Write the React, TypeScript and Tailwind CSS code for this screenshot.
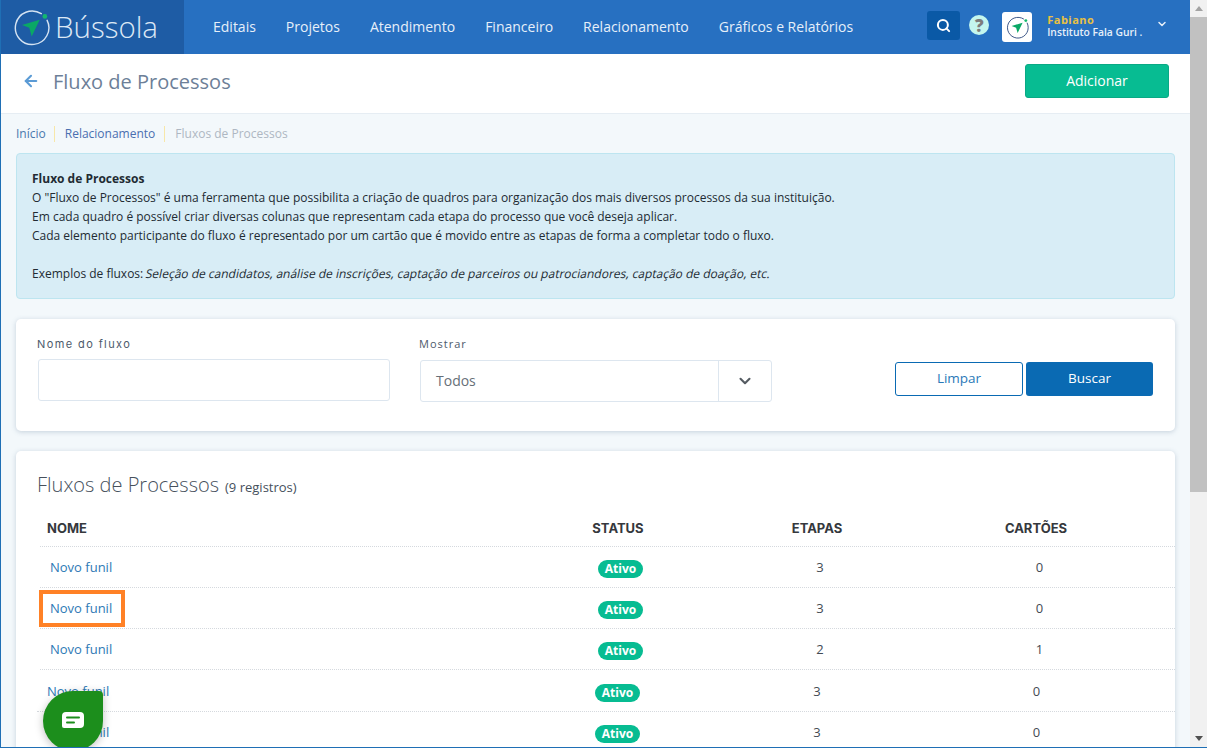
import { ArrowLeft, ChevronDown, Search } from 'lucide-react';

const menu = ['Editais', 'Projetos', 'Atendimento', 'Financeiro', 'Relacionamento', 'Gráficos e Relatórios'];

const rows = [
    { etapas: 3, cartoes: 0, box: 'h-[41px] pt-[2px]' },
    { etapas: 3, cartoes: 0, box: 'h-[41px] pt-[2px]', marked: true },
    { etapas: 2, cartoes: 1, box: 'h-[41px] pt-[2px]' },
    { etapas: 3, cartoes: 0, box: 'h-[42px] pt-[3px] -ml-[3px]' },
    { etapas: 3, cartoes: 0, box: 'h-[41px] pt-[2px] -ml-[3px]' },
];

const cols = 'grid grid-cols-[480px_196px_202px_238px] items-center';

function Compass({ size, ring, dot }: { size: number; ring: string; dot: string }) {
    return (
        <svg width={size} height={size} viewBox="0 0 36 36" fill="none">
            <path d="M27.5 4.6A16.3 16.3 0 1 0 33.2 11" stroke={ring} strokeWidth="1.4" strokeLinecap="round" />
            <circle cx="31" cy="7.2" r="2.3" fill={dot} />
            <path d="M26 10.5 8.8 15.6l7 2.6 2.4 8.6z" fill="#0aa866" />
        </svg>
    );
}

export default function App() {
    return (
        <div className="relative flex h-[748px] w-[1207px] overflow-hidden bg-[#f3f8fb] border-l border-b border-[#1f6fb5] font-['Open_Sans','Noto_Sans',sans-serif]">
            <div className="flex w-[1189px] shrink-0 flex-col">
                {/* top bar */}
                <header className="flex h-[54px] shrink-0 items-center bg-[#2770c1]">
                    <div className="flex h-full w-[183px] items-center gap-[6px] bg-[#1e5ca5] pl-[12px]">
                        <Compass size={37} ring="#d5e3f2" dot="#14b86e" />
                        <span className="-ml-[1px] text-[29.5px] font-light leading-none text-[#dce8f5]">Bússola</span>
                    </div>
                    <nav className="ml-[29px] flex -translate-y-[1px] gap-[30px]">
                        {menu.map((item) => (
                            <span key={item} className="text-[14px] font-medium text-[#e6eff9]">{item}</span>
                        ))}
                    </nav>
                    <div className="ml-[74px] flex h-[29px] w-[33px] -translate-y-[2px] items-center justify-center rounded-[3px] bg-[#0a59a6]">
                        <Search size={15} strokeWidth={3.2} className="text-white" />
                    </div>
                    <div className="ml-[9px] flex h-[20px] w-[20px] -translate-y-[2px] items-center justify-center rounded-full bg-[#c4f6ee] text-[17px] font-extrabold leading-none text-[#7d7d7d]">?</div>
                    <div className="ml-[13px] flex h-[30px] w-[30px] items-center justify-center rounded-[3px] bg-white">
                        <Compass size={23} ring="#27457a" dot="#14b86e" />
                    </div>
                    <div className="ml-[15px] flex w-[110px] -translate-y-[1px] flex-col text-[10.3px] leading-[13px]">
                        <span className="text-[11px] font-bold tracking-[0.5px] text-[#e8c043]">Fabiano</span>
                        <span className="font-semibold text-[#e6eff9]">Instituto Fala Guri .</span>
                    </div>
                    <ChevronDown size={12} strokeWidth={3} className="ml-[-1px] -translate-y-[3px] text-[#e6eff9]" />
                </header>

                {/* title */}
                <div className="flex h-[60px] shrink-0 items-start border-b border-[#e6edf3] bg-white pl-[21px] pr-[21px] pt-[10px]">
                    <ArrowLeft size={18} strokeWidth={2.8} className="mt-[8px] text-[#5b9bd5]" />
                    <h1 className="ml-[13px] mt-[1px] text-[20px] leading-[34px] text-[#6d7f98]">Fluxo de Processos</h1>
                    <button className="ml-auto h-[34px] w-[144px] rounded-[3px] border border-[#0aa985] bg-[#07bc92] pb-[2px] text-[14px] text-white">Adicionar</button>
                </div>

                <main className="flex flex-col px-[15px]">
                    {/* breadcrumb */}
                    <div className="flex h-[39px] items-center text-[12px]">
                        <span className="text-[#4a78ad]">Início</span>
                        <span className="ml-[8px] mr-[10px] h-[16px] w-px bg-[#f7e7a9]" />
                        <span className="text-[#4a6fb0]">Relacionamento</span>
                        <span className="ml-[9px] mr-[10px] h-[16px] w-px bg-[#f7e7a9]" />
                        <span className="text-[#aeb7c2]">Fluxos de Processos</span>
                    </div>

                    {/* info box */}
                    <div className="h-[146px] rounded-[4px] border border-[#bde5f0] bg-[#d8edf6] px-[15px] pt-[15px] text-[12px] leading-[19px] text-[#222b33]">
                        <p className="font-bold">Fluxo de Processos</p>
                        <p>O "Fluxo de Processos" é uma ferramenta que possibilita a criação de quadros para organização dos mais diversos processos da sua instituição.</p>
                        <p>Em cada quadro é possível criar diversas colunas que representam cada etapa do processo que você deseja aplicar.</p>
                        <p>Cada elemento participante do fluxo é representado por um cartão que é movido entre as etapas de forma a completar todo o fluxo.</p>
                        <p className="mt-[19px]">Exemplos de fluxos: <em className="inline-block -skew-x-12 not-italic">Seleção de candidatos, análise de inscrições, captação de parceiros ou patrociandores, captação de doação, etc.</em></p>
                    </div>

                    {/* filter */}
                    <section className="mt-[20px] flex h-[112px] rounded-[5px] bg-white pl-[22px] shadow-[0_1px_5px_rgba(90,120,150,0.3)]">
                        <div className="w-[352px] pt-[18px]">
                            <label className="ml-[-1px] block text-[11px] leading-[15px] tracking-[1.4px] text-[#4d5a6b] font-['Inter',sans-serif]">Nome do fluxo</label>
                            <div className="mt-[7px] h-[42px] rounded-[3px] border border-[#dde6ef]" />
                        </div>
                        <div className="ml-[30px] w-[352px] pt-[17px]">
                            <label className="ml-[-1px] block text-[11px] leading-[15px] tracking-[1px] text-[#4d5a6b]">Mostrar</label>
                            <div className="mt-[9px] flex h-[42px] items-center rounded-[3px] border border-[#dde6ef]">
                                <span className="flex-1 -translate-y-[1px] pl-[15px] text-[14px] text-[#666f78]">Todos</span>
                                <span className="flex h-full w-[53px] items-center justify-center border-l border-[#dde6ef]">
                                    <ChevronDown size={18} strokeWidth={2.8} className="text-[#555b62]" />
                                </span>
                            </div>
                        </div>
                        <div className="ml-[123px] flex gap-[3px] pt-[43px]">
                            <button className="h-[34px] w-[128px] rounded-[3px] border border-[#0a6ab3] bg-white pb-[1px] text-[13.5px] text-[#2a79b8]">Limpar</button>
                            <button className="h-[34px] w-[127px] rounded-[3px] bg-[#0a6ab3] pb-[1px] text-[13.5px] text-white">Buscar</button>
                        </div>
                    </section>

                    {/* list */}
                    <section className="mt-[20px] h-[400px] rounded-[5px] bg-white pl-[24px] pt-[20px] shadow-[0_1px_5px_rgba(90,120,150,0.3)]">
                        <h2 className="-ml-[3px] h-[28px] leading-[28px]">
                            <span className="text-[20px] font-light text-[#46505c]">Fluxos de Processos</span>
                            <span className="ml-[6px] text-[13px] text-[#46505c]">(9 registros)</span>
                        </h2>
                        <div className={`${cols} mt-[15px] h-[33px] border-b border-dotted border-[#d5d9de] pb-[2px] text-center text-[13px] font-bold text-[#35383d] font-['Inter',sans-serif]`}>
                            <span className="pl-[7px] text-left">NOME</span>
                            <span>STATUS</span>
                            <span>ETAPAS</span>
                            <span className="pr-[2px]">CARTÕES</span>
                        </div>
                        {rows.map((row, index) => (
                            <div
                                key={index}
                                className={`${cols} ${row.box} border-b border-dotted border-[#d5d9de] text-center text-[13px] text-[#444b54]`}
                            >
                                <span className="relative pl-[10px] text-left text-[#2d79b5]">
                                    Novo funil
                                    {row.marked && (
                                        <span className="absolute -top-[9px] -left-[1px] h-[37px] w-[86px] border-[4px] border-[#ff8126]" />
                                    )}
                                </span>
                                <span className="pl-[5px]">
                                    <span className="inline-flex h-[18px] w-[45px] translate-y-[1px] items-center justify-center rounded-full bg-[#07bc92] text-[12px] font-bold text-white">Ativo</span>
                                </span>
                                <span className="pl-[6px]">{row.etapas}</span>
                                <span className="pl-[5px]">{row.cartoes}</span>
                            </div>
                        ))}
                    </section>
                </main>
            </div>

            {/* scrollbar */}
            <div className="ml-auto flex w-[17px] shrink-0 flex-col items-center self-stretch bg-[#f1f1f1]">
                <span className="mt-[6px] h-0 w-0 border-x-[4px] border-b-[5px] border-x-transparent border-b-[#a3a3a3]" />
                <span className="mt-[6px] h-[475px] w-full bg-[#c1c1c1]" />
                <span className="mt-auto mb-[6px] h-0 w-0 border-x-[4px] border-t-[5px] border-x-transparent border-t-[#505050]" />
            </div>

            {/* chat button */}
            <div className="absolute left-[42px] top-[691px] flex h-[60px] w-[60px] items-center justify-center rounded-[30px] rounded-tr-[4px] bg-[#1c8e1c] shadow-[0_2px_8px_rgba(0,0,0,0.25)]">
                <svg width="24" height="18" viewBox="0 0 24 18" className="-mt-[3px]">
                    <path d="M5 1h14a4 4 0 0 1 4 4v8a4 4 0 0 1-4 4H3a2 2 0 0 1-2-2V5a4 4 0 0 1 4-4z" fill="#fff" />
                    <rect x="5" y="5.5" width="14" height="2" rx="1" fill="#1c8e1c" />
                    <rect x="5" y="10.5" width="9" height="2" rx="1" fill="#1c8e1c" />
                </svg>
            </div>
        </div>
    );
}
